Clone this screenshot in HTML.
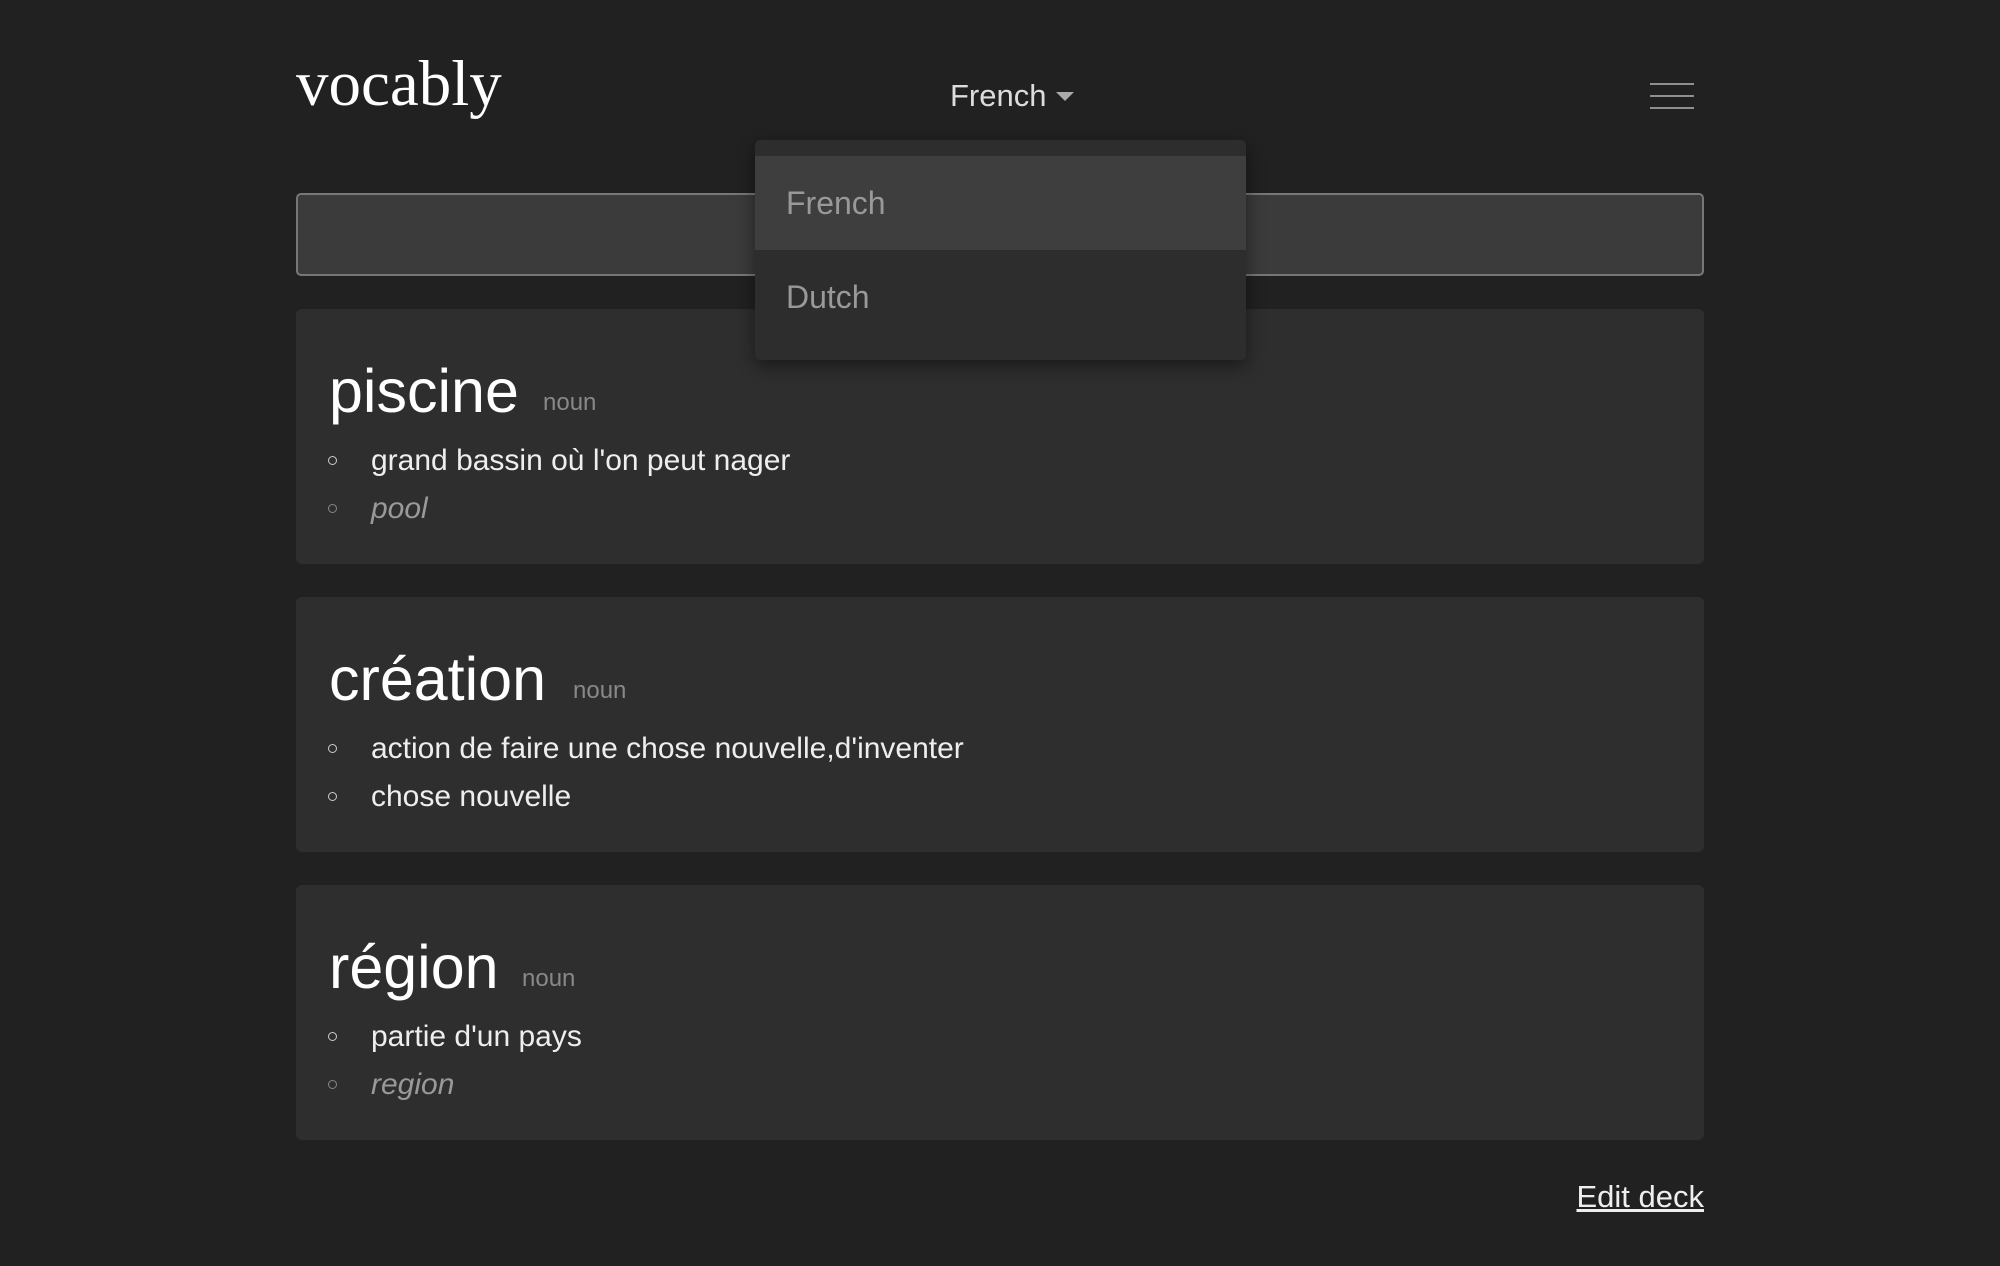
<!DOCTYPE html>
<html><head><meta charset="utf-8"><style>
body{margin:0;width:2000px;height:1266px;background:#212121;font-family:"Liberation Sans",sans-serif;position:relative;overflow:hidden;color:#eee}
.a{position:absolute;white-space:nowrap}
.logo{left:296px;top:52px;font-family:"Liberation Serif",serif;font-size:65px;color:#fff;line-height:1}
.lang{left:950px;top:80px;font-size:31px;color:#ddd;line-height:1}
.caret{left:1056px;top:92px;width:0;height:0;border-left:9px solid transparent;border-right:9px solid transparent;border-top:9px solid #aaa}
.hb{left:1650px;width:44px;height:2px;background:#909090}
.search{left:296px;top:193px;width:1404px;height:79px;background:#3b3b3b;border:2px solid #777;border-radius:5px}
.card{left:296px;width:1408px;height:255px;background:#2e2e2e;border-radius:6px}
.word{font-size:61px;color:#fff;line-height:1}
.pos{font-size:24px;color:#888}
.def{font-size:30px;color:#eee;line-height:1}
.dot{width:7px;height:7px;border:1.5px solid #ccc;border-radius:50%}
.dd{left:755px;top:140px;width:491px;height:220px;background:#2d2d2d;border-radius:5px;box-shadow:0 6px 18px rgba(0,0,0,.45)}
.it{position:absolute;left:0;width:491px;height:94px;font-size:32px;color:#999;line-height:94px;text-indent:31px}
.edit{right:296px;top:1181px;font-size:31px;color:#eee;text-decoration:underline;line-height:1}
</style></head><body>
<div class="a logo">vocably</div>
<div class="a lang">French</div>
<div class="a caret"></div>
<div class="a hb" style="top:83px"></div><div class="a hb" style="top:95px"></div><div class="a hb" style="top:107px"></div>
<div class="a search"></div>

<div class="a card" style="top:309px"></div>
<div class="a word" style="left:329px;top:361px">piscine</div>
<div class="a pos" style="left:543px;top:389px">noun</div>
<div class="a dot" style="left:328px;top:456px"></div>
<div class="a def" style="left:371px;top:446px">grand bassin où l'on peut nager</div>
<div class="a dot" style="left:328px;top:504px;border-color:#888"></div>
<div class="a def" style="left:371px;top:494px;font-style:italic;color:#999">pool</div>

<div class="a card" style="top:597px"></div>
<div class="a word" style="left:329px;top:649px">création</div>
<div class="a pos" style="left:573px;top:677px">noun</div>
<div class="a dot" style="left:328px;top:744px"></div>
<div class="a def" style="left:371px;top:734px">action de faire une chose nouvelle,d'inventer</div>
<div class="a dot" style="left:328px;top:792px"></div>
<div class="a def" style="left:371px;top:782px">chose nouvelle</div>

<div class="a card" style="top:885px"></div>
<div class="a word" style="left:329px;top:937px">région</div>
<div class="a pos" style="left:522px;top:965px">noun</div>
<div class="a dot" style="left:328px;top:1032px"></div>
<div class="a def" style="left:371px;top:1022px">partie d'un pays</div>
<div class="a dot" style="left:328px;top:1080px;border-color:#888"></div>
<div class="a def" style="left:371px;top:1070px;font-style:italic;color:#999">region</div>

<div class="a edit">Edit deck</div>

<div class="a dd">
<div class="it" style="top:16px;background:#3e3e3e">French</div>
<div class="it" style="top:110px">Dutch</div>
</div>
</body></html>
